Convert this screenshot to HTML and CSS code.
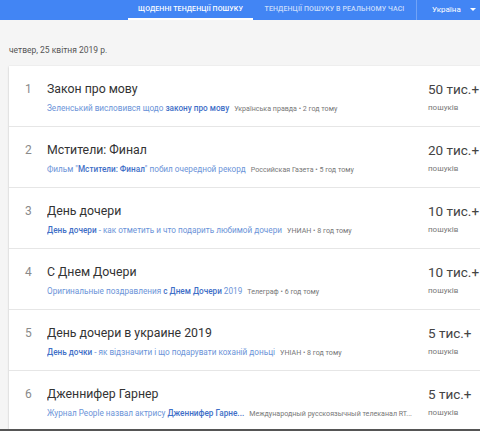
FILE: index.html
```html
<!DOCTYPE html>
<html lang="uk">
<head>
<meta charset="utf-8">
<link rel="stylesheet" href="styles.css">
</head>
<body>
<header class="topbar">
  <nav class="tabs">
    <div class="tab active">ЩОДЕННІ ТЕНДЕНЦІЇ ПОШУКУ</div>
    <div class="tab">ТЕНДЕНЦІЇ ПОШУКУ В РЕАЛЬНОМУ ЧАСІ</div>
  </nav>
  <div class="country">Україна <span class="caret"></span></div>
</header>
<main class="content">
  <div class="date">четвер, 25 квітня 2019 р.</div>
  <section class="card">
    <div class="row">
      <div class="idx">1</div>
      <div class="main">
        <div class="title">Закон про мову</div>
        <div class="sub"><span class="link">Зеленський висловився щодо <b>закону про мову</b></span><span class="src">Українська правда • 2 год тому</span></div>
      </div>
      <div class="count"><div class="num">50 тис.+</div><div class="lbl">пошуків</div></div>
    </div>
    <div class="row">
      <div class="idx">2</div>
      <div class="main">
        <div class="title">Мстители: Финал</div>
        <div class="sub"><span class="link">Фильм "<b>Мстители: Финал</b>" побил очередной рекорд</span><span class="src">Российская Газета • 5 год тому</span></div>
      </div>
      <div class="count"><div class="num">20 тис.+</div><div class="lbl">пошуків</div></div>
    </div>
    <div class="row">
      <div class="idx">3</div>
      <div class="main">
        <div class="title">День дочери</div>
        <div class="sub"><span class="link"><b>День дочери</b> - как отметить и что подарить любимой дочери</span><span class="src">УНИАН • 8 год тому</span></div>
      </div>
      <div class="count"><div class="num">10 тис.+</div><div class="lbl">пошуків</div></div>
    </div>
    <div class="row">
      <div class="idx">4</div>
      <div class="main">
        <div class="title">С Днем Дочери</div>
        <div class="sub"><span class="link">Оригинальные поздравления <b>с Днем Дочери</b> 2019</span><span class="src">Телеграф • 6 год тому</span></div>
      </div>
      <div class="count"><div class="num">10 тис.+</div><div class="lbl">пошуків</div></div>
    </div>
    <div class="row">
      <div class="idx">5</div>
      <div class="main">
        <div class="title">День дочери в украине 2019</div>
        <div class="sub"><span class="link"><b>День дочки</b> - як відзначити і що подарувати коханій доньці</span><span class="src">УНІАН • 8 год тому</span></div>
      </div>
      <div class="count"><div class="num">5 тис.+</div><div class="lbl">пошуків</div></div>
    </div>
    <div class="row">
      <div class="idx">6</div>
      <div class="main">
        <div class="title">Дженнифер Гарнер</div>
        <div class="sub"><span class="link">Журнал People назвал актрису <b>Дженнифер Гарне...</b></span><span class="src">Международный русскоязычный телеканал RT...</span></div>
      </div>
      <div class="count"><div class="num">5 тис.+</div><div class="lbl">пошуків</div></div>
    </div>
  </section>
</main>
<div class="bottomline"></div>
</body>
</html>
```
FILE: styles.css
```css
html, body {
  margin: 0;
  padding: 0;
  height: 431px;
  overflow: hidden;
}
body {
  background: #f5f5f5;
  font-family: Roboto, "Liberation Sans", Arial, sans-serif;
  position: relative;
}
.topbar {
  height: 20px;
  background: #4285f4;
  display: flex;
  align-items: stretch;
  padding-left: 128px;
  box-sizing: border-box;
}
.tabs {
  display: flex;
}
.tab {
  font-size: 7px;
  font-weight: 500;
  color: rgba(255,255,255,0.72);
  display: flex;
  align-items: center;
  justify-content: center;
  padding: 0 8px 2px;
  box-sizing: border-box;
  letter-spacing: 0.1px;
}
.tab.active {
  width: 125px;
  color: #fff;
  border-bottom: 2px solid #fff;
  padding-bottom: 0;
}
.tab:nth-child(2) {
  width: 164px;
  border-right: 1px solid rgba(255,255,255,0.25);
}
.country {
  color: #fff;
  font-size: 8px;
  display: flex;
  align-items: center;
  padding-left: 15px;
  padding-bottom: 2px;
}
.caret {
  display: inline-block;
  width: 0;
  height: 0;
  border-left: 3px solid transparent;
  border-right: 3px solid transparent;
  border-top: 3px solid #fff;
  margin-left: 9px;
}
.content {
  padding-left: 9px;
}
.date {
  font-size: 8.5px;
  color: #555;
  padding-top: 25px;
  height: 21px;
}
.card {
  background: #fff;
  width: 490px;
  box-shadow: 0 1px 2px rgba(0,0,0,0.18), 0 0 1px rgba(0,0,0,0.1);
}
.row {
  height: 61px;
  display: flex;
  align-items: flex-start;
  border-bottom: 1px solid #e6e6e6;
  box-sizing: border-box;
}
.idx {
  width: 38px;
  padding-left: 16px;
  box-sizing: border-box;
  font-size: 12px;
  color: #8a8a8a;
  padding-top: 16px;
}
.main {
  width: 381px;
  padding-top: 15px;
  overflow: hidden;
}
.title {
  font-size: 12.3px;
  color: #333;
  line-height: 16px;
}
.sub {
  margin-top: 6px;
  font-size: 8.2px;
  line-height: 10px;
  white-space: nowrap;
}
.link {
  color: #6b93d8;
}
.link b {
  color: #3f6fc7;
  font-weight: 500;
}
.src {
  color: #777;
  font-size: 7.1px;
  margin-left: 5px;
}
.count {
  padding-top: 14px;
}
.num {
  font-size: 13.5px;
  color: #444;
  line-height: 18px;
}
.lbl {
  font-size: 8px;
  color: #777;
  margin-top: 5px;
}
.bottomline {
  position: absolute;
  left: 0;
  bottom: 0;
  width: 480px;
  height: 2px;
  background: #555;
}
```
